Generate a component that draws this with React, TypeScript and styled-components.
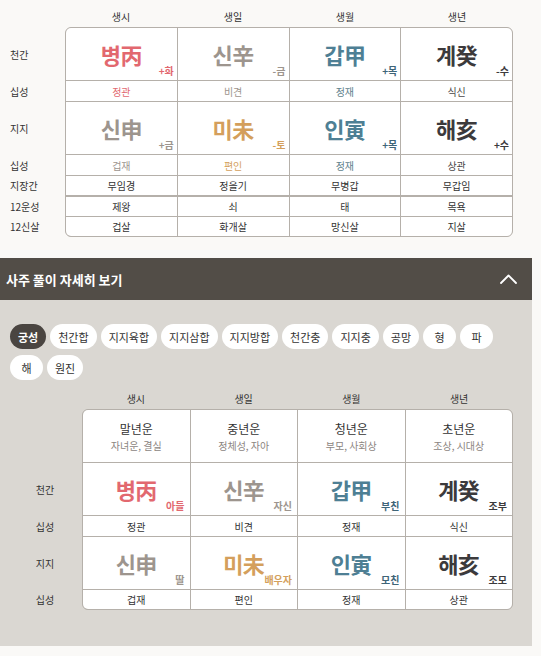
import React from 'react';
import styled, { createGlobalStyle } from 'styled-components';

const RED = '#e2686f';
const GRAY = '#9d958e';
const ORANGE = '#d49f5c';
const TEAL = '#4e7f94';
const DARK = '#3c3a3c';
const LINE = '#b5b0aa';

const GlobalStyle = createGlobalStyle`
  html, body { margin: 0; padding: 0; background: #faf9f7; }
  body { font-family: "Noto Sans CJK KR", "Noto Sans", sans-serif; color: #333; }
  * { box-sizing: border-box; }
`;

const Page = styled.div`
  width: 532px;
`;

const Chart = styled.div<{ $pad: string }>`
  display: flex;
  padding: ${p => p.$pad};
`;

const SideCol = styled.div<{ $w: number; $top: number }>`
  width: ${p => p.$w}px;
  flex: none;
  display: flex;
  flex-direction: column;
  gap: 1px;
  padding-top: ${p => p.$top}px;
`;

const SideLabel = styled.div<{ $h: number; $center?: boolean; $mt?: number }>`
  height: ${p => p.$h}px;
  margin-top: ${p => p.$mt || 0}px;
  display: flex;
  align-items: center;
  justify-content: ${p => (p.$center ? 'center' : 'flex-start')};
  padding-left: ${p => (p.$center ? 8 : 0)}px;
  font-size: 10px;
  color: #333;
  white-space: nowrap;
`;

const Board = styled.div`
  flex: 1;
  display: flex;
  flex-direction: column;
`;

const HeadRow = styled.div<{ $h: number; $pt: number }>`
  height: ${p => p.$h}px;
  padding-top: ${p => p.$pt}px;
  display: grid;
  grid-template-columns: repeat(4, 1fr);
  align-items: center;
`;

const HeadCell = styled.div`
  text-align: center;
  font-size: 10px;
  color: #333;
`;

const Grid = styled.div`
  display: grid;
  grid-template-columns: repeat(4, 1fr);
  gap: 1px;
  background: ${LINE};
  border: 1px solid ${LINE};
  border-radius: 6px;
  overflow: hidden;
`;

const Cell = styled.div<{ $h: number; $mt?: number; $c?: string }>`
  height: ${p => p.$h}px;
  margin-top: ${p => p.$mt || 0}px;
  background: #fff;
  display: flex;
  align-items: center;
  justify-content: center;
  font-size: 10px;
  color: ${p => p.$c || '#333'};
  white-space: nowrap;
`;

const PillarCell = styled.div<{ $h: number }>`
  height: ${p => p.$h}px;
  background: #fff;
  display: grid;
  grid-template: 1fr / 1fr;
  & > * { grid-area: 1 / 1; }
`;

const Glyph = styled.span<{ $c: string }>`
  place-self: center;
  font-size: 22px;
  font-weight: 700;
  line-height: 1;
  color: ${p => p.$c};
  letter-spacing: -0.5px;
`;

const Tag = styled.span<{ $c: string; $pr: number }>`
  place-self: end;
  font-size: 10px;
  font-weight: 700;
  line-height: 1;
  color: ${p => p.$c};
  padding: 0 ${p => p.$pr}px 4px 0;
`;

const PalaceCell = styled.div<{ $h: number }>`
  height: ${p => p.$h}px;
  background: #fff;
  display: flex;
  flex-direction: column;
  align-items: center;
  justify-content: center;
  gap: 3px;
`;

const PalaceName = styled.span`
  font-size: 12px;
  line-height: 15px;
  color: #333;
`;

const PalaceDesc = styled.span`
  font-size: 10px;
  line-height: 13px;
  color: #8c857f;
`;

const TitleBar = styled.div`
  height: 42px;
  background: #524d47;
  display: flex;
  align-items: center;
  justify-content: space-between;
  padding: 0 15px 0 6px;
`;

const Title = styled.h2`
  margin: 0;
  font-size: 13px;
  font-weight: 700;
  color: #fff;
`;

const Detail = styled.section`
  background: #dad7d2;
  padding: 24px 0 36px;
`;

const Chips = styled.div`
  display: flex;
  flex-wrap: wrap;
  gap: 6px 4px;
  padding: 0 10px;
`;

const Chip = styled.button<{ $active?: boolean }>`
  height: 25px;
  min-width: 33px;
  padding: 0 8px;
  border: none;
  border-radius: 13px;
  font-family: inherit;
  font-size: 11px;
  font-weight: ${p => (p.$active ? 700 : 400)};
  background: ${p => (p.$active ? '#4a4541' : '#fff')};
  color: ${p => (p.$active ? '#fff' : '#333')};
  cursor: pointer;
`;

type Pillar = {
  head: string;
  stem: [string, string, string];
  ss1: [string, string];
  branch: [string, string, string];
  ss2: [string, string];
  jj: string;
  un: string;
  sal: string;
  palace: [string, string];
  rel: [string, string];
};

const pillars: Pillar[] = [
  { head: '생시', stem: ['병丙', RED, '+화'], ss1: ['정관', RED], branch: ['신申', GRAY, '+금'], ss2: ['겁재', GRAY], jj: '무임경', un: '제왕', sal: '겁살', palace: ['말년운', '자녀운, 결실'], rel: ['아들', '딸'] },
  { head: '생일', stem: ['신辛', GRAY, '-금'], ss1: ['비견', GRAY], branch: ['미未', ORANGE, '-토'], ss2: ['편인', ORANGE], jj: '정을기', un: '쇠', sal: '화개살', palace: ['중년운', '정체성, 자아'], rel: ['자신', '배우자'] },
  { head: '생월', stem: ['갑甲', TEAL, '+목'], ss1: ['정재', '#5f7f8d'], branch: ['인寅', TEAL, '+목'], ss2: ['정재', '#5f7f8d'], jj: '무병갑', un: '태', sal: '망신살', palace: ['청년운', '부모, 사회상'], rel: ['부친', '모친'] },
  { head: '생년', stem: ['계癸', DARK, '-수'], ss1: ['식신', '#4a4748'], branch: ['해亥', DARK, '+수'], ss2: ['상관', '#4a4748'], jj: '무갑임', un: '목욕', sal: '지살', palace: ['초년운', '조상, 시대상'], rel: ['조부', '조모'] },
];

const tagColor = (c: string) => (c === TEAL ? '#3f6578' : c);

const chips = ['궁성', '천간합', '지지육합', '지지삼합', '지지방합', '천간충', '지지충', '공망', '형', '파', '해', '원진'];

const Chevron = () => (
  <svg width="17" height="10" viewBox="0 0 17 10" fill="none">
    <polyline points="1,9 8.5,1.5 16,9" stroke="#fff" strokeWidth="1.8" strokeLinecap="round" strokeLinejoin="round" />
  </svg>
);

export default function App() {
  return (
    <Page>
      <GlobalStyle />
      <Chart $pad="0 19px 21px 10px">
        <SideCol $w={55} $top={28}>
          <SideLabel $h={52}>천간</SideLabel>
          <SideLabel $h={20}>십성</SideLabel>
          <SideLabel $h={52}>지지</SideLabel>
          <SideLabel $h={20}>십성</SideLabel>
          <SideLabel $h={19}>지장간</SideLabel>
          <SideLabel $h={19} $mt={1}>12운성</SideLabel>
          <SideLabel $h={19}>12신살</SideLabel>
        </SideCol>
        <Board>
          <HeadRow $h={27} $pt={6}>
            {pillars.map(p => <HeadCell key={p.head}>{p.head}</HeadCell>)}
          </HeadRow>
          <Grid>
            {pillars.map(p => (
              <PillarCell key={'s' + p.head} $h={52}>
                <Glyph $c={p.stem[1]}>{p.stem[0]}</Glyph>
                <Tag $c={tagColor(p.stem[1])} $pr={3}>{p.stem[2]}</Tag>
              </PillarCell>
            ))}
            {pillars.map(p => <Cell key={'a' + p.head} $h={20} $c={p.ss1[1]}>{p.ss1[0]}</Cell>)}
            {pillars.map(p => (
              <PillarCell key={'b' + p.head} $h={52}>
                <Glyph $c={p.branch[1]}>{p.branch[0]}</Glyph>
                <Tag $c={tagColor(p.branch[1])} $pr={3}>{p.branch[2]}</Tag>
              </PillarCell>
            ))}
            {pillars.map(p => <Cell key={'c' + p.head} $h={20} $c={p.ss2[1]}>{p.ss2[0]}</Cell>)}
            {pillars.map(p => <Cell key={'d' + p.head} $h={19}>{p.jj}</Cell>)}
            {pillars.map(p => <Cell key={'e' + p.head} $h={19} $mt={1}>{p.un}</Cell>)}
            {pillars.map(p => <Cell key={'f' + p.head} $h={19}>{p.sal}</Cell>)}
          </Grid>
        </Board>
      </Chart>

      <TitleBar>
        <Title>사주 풀이 자세히 보기</Title>
        <Chevron />
      </TitleBar>

      <Detail>
        <Chips>
          {chips.map((c, i) => <Chip key={c} $active={i === 0}>{c}</Chip>)}
        </Chips>
        <Chart $pad="0 19px 0 0">
          <SideCol $w={82} $top={30}>
            <SideLabel $h={52} $center />
            <SideLabel $h={52} $center>천간</SideLabel>
            <SideLabel $h={20} $center>십성</SideLabel>
            <SideLabel $h={52} $center>지지</SideLabel>
            <SideLabel $h={19} $center>십성</SideLabel>
          </SideCol>
          <Board>
            <HeadRow $h={29} $pt={7}>
              {pillars.map(p => <HeadCell key={p.head}>{p.head}</HeadCell>)}
            </HeadRow>
            <Grid>
              {pillars.map(p => (
                <PalaceCell key={'p' + p.head} $h={52}>
                  <PalaceName>{p.palace[0]}</PalaceName>
                  <PalaceDesc>{p.palace[1]}</PalaceDesc>
                </PalaceCell>
              ))}
              {pillars.map(p => (
                <PillarCell key={'s' + p.head} $h={52}>
                  <Glyph $c={p.stem[1]}>{p.stem[0]}</Glyph>
                  <Tag $c={tagColor(p.stem[1])} $pr={5}>{p.rel[0]}</Tag>
                </PillarCell>
              ))}
              {pillars.map(p => <Cell key={'a' + p.head} $h={20}>{p.ss1[0]}</Cell>)}
              {pillars.map(p => (
                <PillarCell key={'b' + p.head} $h={52}>
                  <Glyph $c={p.branch[1]}>{p.branch[0]}</Glyph>
                  <Tag $c={tagColor(p.branch[1])} $pr={5}>{p.rel[1]}</Tag>
                </PillarCell>
              ))}
              {pillars.map(p => <Cell key={'c' + p.head} $h={19}>{p.ss2[0]}</Cell>)}
            </Grid>
          </Board>
        </Chart>
      </Detail>
    </Page>
  );
}
